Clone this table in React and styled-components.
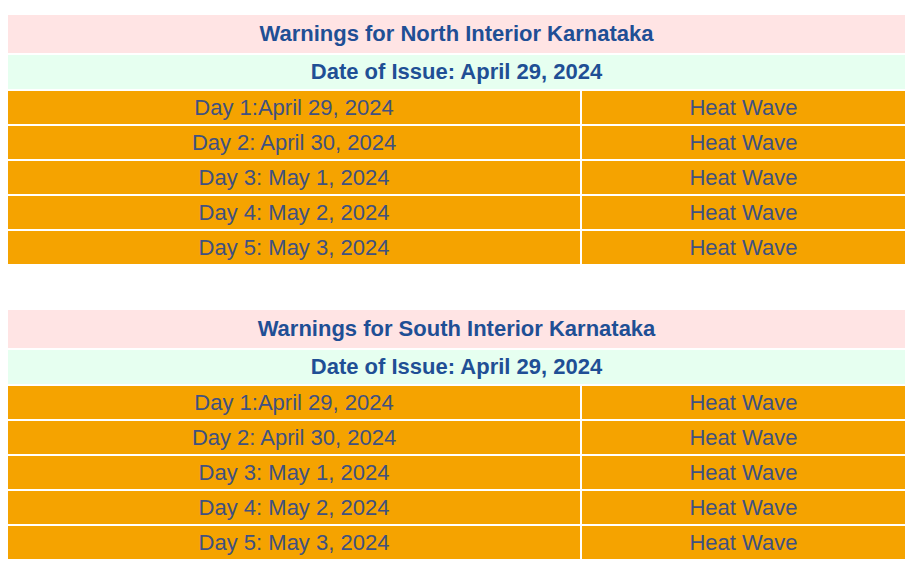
import React from "react";
import styled, { createGlobalStyle } from "styled-components";

const Global = createGlobalStyle`
  html, body { margin: 0; padding: 0; background: #fff; }
  body { font-family: "Liberation Sans", Arial, sans-serif; }
`;

const Page = styled.div`
  display: flex;
  flex-direction: column;
  gap: 46px;
  padding: 15px 9px 0 8px;
  width: 914px;
  box-sizing: border-box;
`;

const Table = styled.div`
  display: grid;
  grid-template-columns: 572px 1fr;
  gap: 2px;
`;

const Title = styled.div`
  grid-column: 1 / -1;
  height: 38px;
  display: flex;
  align-items: center;
  justify-content: center;
  background: #ffe4e4;
  color: #1f4f95;
  font-weight: bold;
  font-size: 22px;
`;

const DateRow = styled(Title)`
  height: 34px;
  background: #e6fff0;
`;

const Cell = styled.div`
  height: 33px;
  display: flex;
  align-items: center;
  justify-content: center;
  background: #f5a300;
  color: #3f5181;
  font-size: 22px;
`;

const days = [
  "Day 1:April 29, 2024",
  "Day 2: April 30, 2024",
  "Day 3: May 1, 2024",
  "Day 4: May 2, 2024",
  "Day 5: May 3, 2024",
];

function Warnings({ region }) {
  return (
    <Table>
      <Title>Warnings for {region} Interior Karnataka</Title>
      <DateRow>Date of Issue: April 29, 2024</DateRow>
      {days.map((d) => (
        <React.Fragment key={d}>
          <Cell>{d}</Cell>
          <Cell>Heat Wave</Cell>
        </React.Fragment>
      ))}
    </Table>
  );
}

export default function App() {
  return (
    <>
      <Global />
      <Page>
        <Warnings region="North" />
        <Warnings region="South" />
      </Page>
    </>
  );
}
